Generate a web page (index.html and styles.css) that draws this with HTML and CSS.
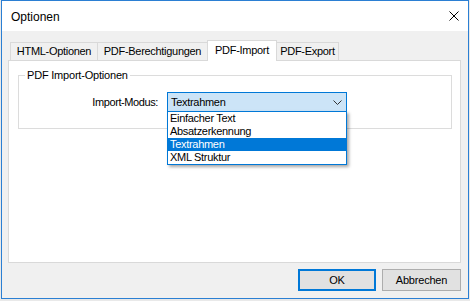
FILE: index.html
```html
<!DOCTYPE html>
<html lang="de">
<head>
<meta charset="utf-8">
<title>Optionen</title>
<link rel="stylesheet" href="styles.css">
</head>
<body>
<div class="window">
  <div class="titlebar">
    <span class="title">Optionen</span>
    <svg class="close" width="10" height="10" viewBox="0 0 10 10"><path d="M0.5 0.5 L9.5 9.5 M9.5 0.5 L0.5 9.5" stroke="#000" stroke-width="1" fill="none"/></svg>
  </div>
  <div class="content">
    <div class="tabs">
      <div class="tab tab-html">HTML-Optionen</div>
      <div class="tab tab-perm">PDF-Berechtigungen</div>
      <div class="tab tab-import selected">PDF-Import</div>
      <div class="tab tab-export">PDF-Export</div>
    </div>
    <div class="panel">
      <fieldset class="group">
        <legend>PDF Import-Optionen</legend>
        <div class="row">
          <label class="label">Import-Modus:</label>
          <div class="combo">
            <span class="combo-value">Textrahmen</span>
            <svg class="chevron" width="9" height="5" viewBox="0 0 9 5"><path d="M0.5 0.5 L4.5 4.5 L8.5 0.5" stroke="#333" stroke-width="1" fill="none"/></svg>
            <ul class="list">
              <li class="item">Einfacher Text</li>
              <li class="item">Absatzerkennung</li>
              <li class="item active">Textrahmen</li>
              <li class="item">XML Struktur</li>
            </ul>
          </div>
        </div>
      </fieldset>
    </div>
    <div class="buttons">
      <button class="btn btn-default">OK</button>
      <button class="btn btn-cancel">Abbrechen</button>
    </div>
  </div>
</div>
</body>
</html>
```
FILE: styles.css
```css
* { box-sizing: border-box; }
html, body { margin: 0; padding: 0; }
body {
  background: #e9e9e9;
  font-family: "Liberation Sans", Arial, sans-serif;
  font-size: 11px;
  color: #000;
  width: 470px;
  height: 301px;
  overflow: hidden;
}
.window {
  margin-left: 1px;
  width: 468px;
  height: 299px;
  border: 1px solid #2b7fd3;
  background: #f0f0f0;
  display: flex;
  flex-direction: column;
}
.titlebar {
  height: 30px;
  background: #fff;
  display: flex;
  align-items: center;
  justify-content: space-between;
  padding: 0 9px 0 9px;
}
.title {
  font-size: 12px;
  line-height: 28px;
  padding-top: 2px;
}
.close { display: block; }
.content {
  flex: 1;
  padding: 9px 7px 7px 6px;
  display: flex;
  flex-direction: column;
}
.tabs {
  display: flex;
  align-items: flex-end;
  height: 21px;
  margin-left: 2px;
}
.tab {
  height: 18px;
  margin-bottom: 1px;
  margin-right: -1px;
  border: 1px solid #d9d9d9;
  border-bottom: none;
  background: #f0f0f0;
  text-align: center;
  line-height: 13px;
  padding-top: 2px;
  letter-spacing: -0.3px;
  white-space: nowrap;
}
.tab-html { width: 88px; }
.tab-perm { width: 111px; }
.tab-import { width: 70px; }
.tab-export { width: 63px; }
.tab.selected {
  height: 21px;
  margin-bottom: 0;
  background: #fff;
  padding-top: 3px;
  position: relative;
  z-index: 2;
}
.panel {
  margin-top: -1px;
  height: 203px;
  border: 1px solid #d9d9d9;
  background: #fff;
  padding: 0 8px 0 9px;
}
.group {
  margin: 8px 0 0 0;
  border: 1px solid #dcdcdc;
  padding: 0 0 0 6px;
  min-width: 0;
}
.group legend {
  padding: 0 2px;
  line-height: 12px;
  letter-spacing: -0.2px;
}
.row {
  display: flex;
  align-items: center;
  margin: 11px 0 16px 0;
  height: 20px;
}
.label {
  width: 133px;
  text-align: right;
  margin-right: 9px;
  letter-spacing: -0.4px;
}
.combo {
  position: relative;
  width: 180px;
  height: 20px;
  border: 1px solid #0078d7;
  background: #cce4f7;
  display: flex;
  align-items: center;
  justify-content: space-between;
  padding: 0 4px 0 3px;
}
.combo-value { letter-spacing: -0.3px; line-height: 13px; }
.chevron { display: block; }
.list {
  position: absolute;
  top: 100%;
  left: -1px;
  width: 180px;
  margin: 0;
  padding: 0;
  list-style: none;
  background: #fff;
  border: 1px solid #0078d7;
  box-shadow: 2px 2px 3px rgba(0,0,0,0.35);
  z-index: 5;
}
.item {
  height: 13px;
  line-height: 13px;
  padding-left: 2px;
  letter-spacing: -0.3px;
  white-space: nowrap;
}
.item.active {
  background: #0078d7;
  color: #fff;
}
.buttons {
  margin-top: 6px;
  display: flex;
  justify-content: flex-end;
  gap: 6px;
}
.btn {
  height: 22px;
  margin: 0;
  padding: 0;
  font-family: "Liberation Sans", Arial, sans-serif;
  font-size: 11px;
  letter-spacing: -0.2px;
  color: #000;
  background: #e1e1e1;
  border: 1px solid #adadad;
}
.btn-default { width: 78px; border: 2px solid #0078d7; }
.btn-cancel { width: 79px; }
```
